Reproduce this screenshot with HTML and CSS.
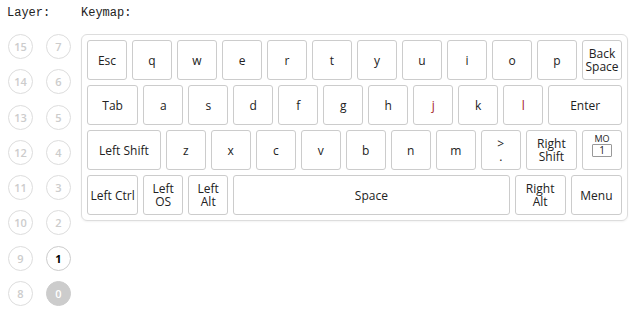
FILE: index.html
```html
<!DOCTYPE html>
<html lang="en">
<head>
<meta charset="UTF-8">
<title>Keymap</title>
<link rel="stylesheet" href="styles.css">
</head>
<body>
  <div class="app">
    <div class="layer-panel">
      <div class="label">Layer:</div>
      <div class="layers">
        <span class="layer">15</span><span class="layer">7</span>
        <span class="layer">14</span><span class="layer">6</span>
        <span class="layer">13</span><span class="layer">5</span>
        <span class="layer">12</span><span class="layer">4</span>
        <span class="layer">11</span><span class="layer">3</span>
        <span class="layer">10</span><span class="layer">2</span>
        <span class="layer">9</span><span class="layer active">1</span>
        <span class="layer">8</span><span class="layer base">0</span>
      </div>
    </div>

    <div class="keymap-panel">
      <div class="label">Keymap:</div>
      <div class="keyboard">
        <div class="key-row">
          <div class="key">Esc</div>
          <div class="key">q</div>
          <div class="key">w</div>
          <div class="key">e</div>
          <div class="key">r</div>
          <div class="key">t</div>
          <div class="key">y</div>
          <div class="key">u</div>
          <div class="key">i</div>
          <div class="key">o</div>
          <div class="key">p</div>
          <div class="key">Back<br>Space</div>
        </div>
        <div class="key-row">
          <div class="key u125">Tab</div>
          <div class="key">a</div>
          <div class="key">s</div>
          <div class="key">d</div>
          <div class="key">f</div>
          <div class="key">g</div>
          <div class="key">h</div>
          <div class="key red">j</div>
          <div class="key">k</div>
          <div class="key red">l</div>
          <div class="key u175">Enter</div>
        </div>
        <div class="key-row">
          <div class="key u175">Left Shift</div>
          <div class="key">z</div>
          <div class="key">x</div>
          <div class="key">c</div>
          <div class="key">v</div>
          <div class="key">b</div>
          <div class="key">n</div>
          <div class="key">m</div>
          <div class="key">&gt;<br>.</div>
          <div class="key u125">Right<br>Shift</div>
          <div class="key mo">
            <span class="mo-name">MO</span>
            <span class="mo-arg">1</span>
          </div>
        </div>
        <div class="key-row">
          <div class="key u125">Left Ctrl</div>
          <div class="key">Left<br>OS</div>
          <div class="key">Left<br>Alt</div>
          <div class="key u625">Space</div>
          <div class="key u125">Right<br>Alt</div>
          <div class="key u125">Menu</div>
        </div>
      </div>
    </div>
  </div>
</body>
</html>
```
FILE: styles.css
```css
body {
  margin: 0;
  padding: 0;
  background: white;
  font-family: 'Open Sans', 'Noto Sans', sans-serif;
  color: #222;
}

.app {
  display: flex;
  padding: 6px 0 0 8px;
}

.label {
  font-family: 'Liberation Mono', monospace;
  font-size: 12px;
  line-height: 14px;
  height: 14px;
  margin-bottom: 14px;
  color: #222;
}

.layer-panel {
  width: 74px;
  margin-left: -1px;
}

.layers {
  display: grid;
  grid-template-columns: 25px 25px;
  column-gap: 13px;
  row-gap: 10.3px;
  padding-left: 1px;
  margin-top: 1px;
}

.layer {
  box-sizing: border-box;
  width: 25px;
  height: 25px;
  border: 1px solid #ddd;
  border-radius: 50%;
  display: flex;
  align-items: center;
  justify-content: center;
  font-size: 11px;
  font-weight: 600;
  color: #ccc;
}

.layer.active {
  color: #000;
  border-color: #ccc;
  font-weight: 700;
}

.layer.base {
  background: #ccc;
  border-color: #ccc;
  color: white;
}

.keymap-panel {
  display: flex;
  flex-direction: column;
}

.keyboard {
  box-sizing: border-box;
  width: 547px;
  padding: 5px;
  border: 1px solid #ddd;
  border-radius: 6px;
  box-shadow: 0 1px 2px rgba(0,0,0,0.05);
  display: flex;
  flex-direction: column;
  gap: 5px;
}

.key-row {
  display: flex;
  gap: 5px;
}

.key {
  box-sizing: border-box;
  width: 40px;
  height: 40px;
  flex: none;
  border: 1px solid #ccc;
  border-radius: 3px;
  background: white;
  display: flex;
  flex-direction: column;
  align-items: center;
  justify-content: center;
  text-align: center;
  font-size: 12px;
  line-height: 13px;
}

.u125 { width: 51.25px; }
.u175 { width: 73.75px; }
.u625 { width: 276.25px; }

.red { color: #a31a1a; }

.mo {
  justify-content: flex-start;
  padding-top: 3px;
}

.mo-name {
  font-size: 9px;
  line-height: 10px;
}

.mo-arg {
  box-sizing: border-box;
  width: 20px;
  height: 13px;
  border: 1px solid #999;
  border-radius: 1px;
  font-size: 10px;
  line-height: 11px;
}
```
